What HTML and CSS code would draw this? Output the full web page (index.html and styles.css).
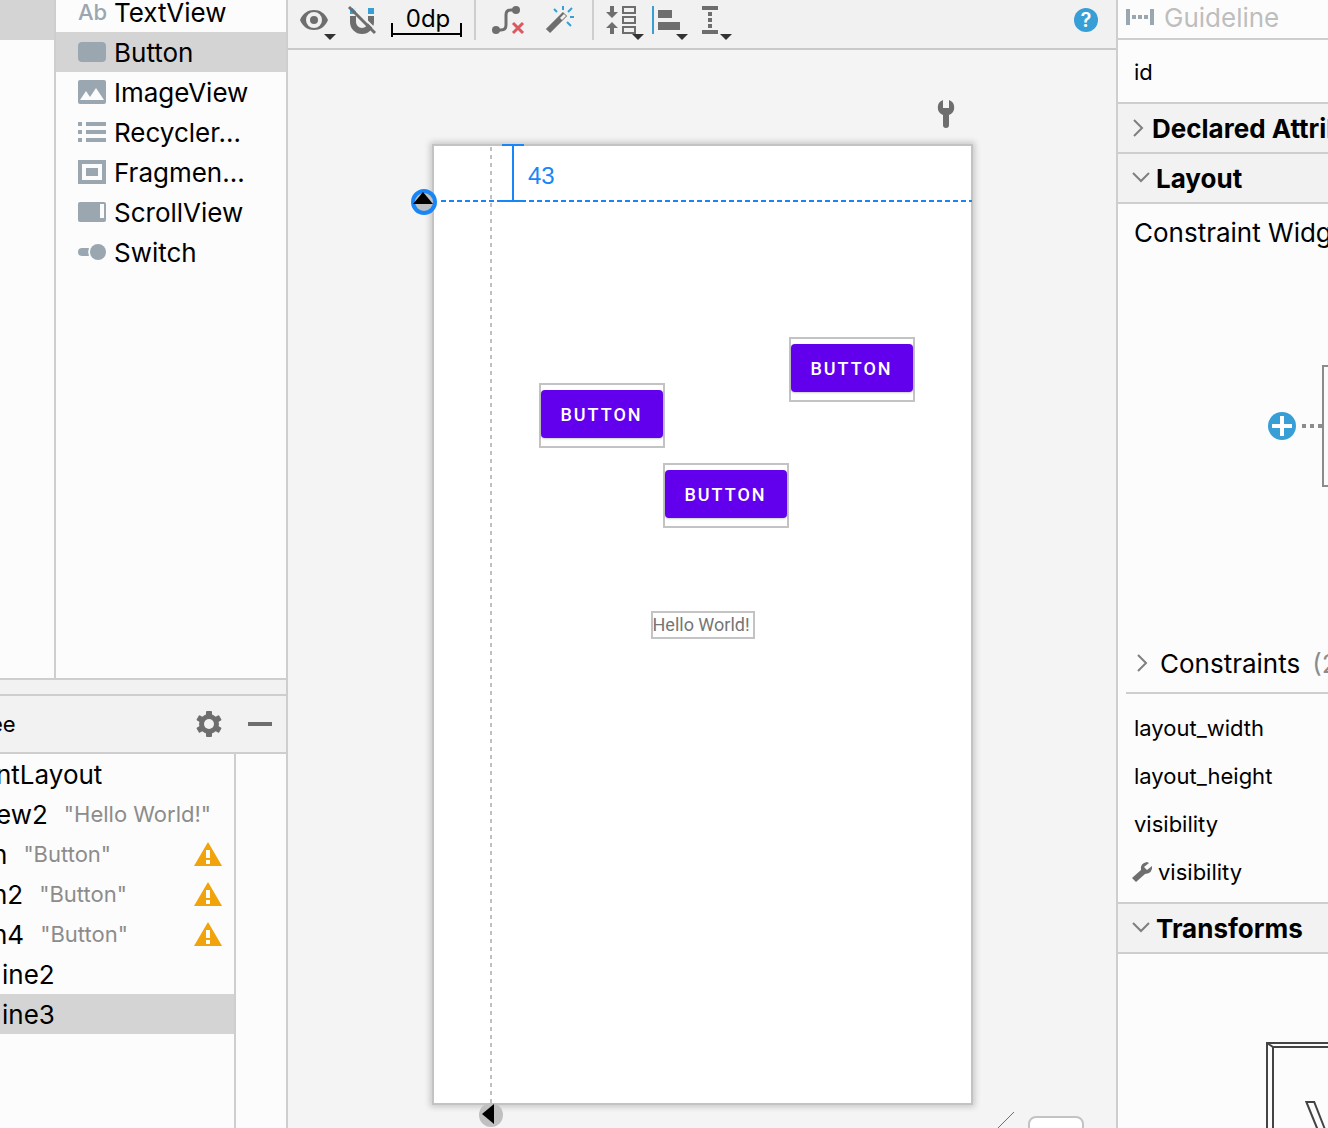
FILE: index.html
```html
<!DOCTYPE html>
<html lang="en">
<head>
  <meta charset="UTF-8"/>
  <meta name="viewport" content="width=device-width, initial-scale=1.0"/>
  <title>Layout Editor</title>
  <link rel="stylesheet" href="styles.css">
</head>
<body>
<div class="editor">

  <aside class="sidebar">
    <!-- Palette -->
    <section class="palette">
      <div class="categories">
        <div class="category selected"></div>
      </div>
      <ul class="widgets">
        <li><span class="ab">Ab</span>TextView</li>
        <li class="selected">
          <svg width="28" height="24"><rect y="2" width="28" height="20" rx="4"/></svg>Button
        </li>
        <li>
          <svg width="28" height="24"><rect width="28" height="24" rx="2"/><path class="cut" d="M2 20 L8 11 L12 17 L18 8 L26 20 Z"/></svg>ImageView
        </li>
        <li>
          <svg width="28" height="24"><path d="M0 2h4v4H0zM8 2h20v4H8zM0 10h4v4H0zM8 10h20v4H8zM0 18h4v4H0zM8 18h20v4H8z"/></svg>Recycler...
        </li>
        <li>
          <svg width="28" height="24"><path fill-rule="evenodd" d="M0 0h28v24H0zM4 4v16h20V4zM8 8h12v8H8z"/></svg>Fragmen...
        </li>
        <li>
          <svg width="28" height="24"><rect y="2" width="28" height="20" rx="2"/><path class="cut" d="M22 4h4v14h-4z"/></svg>ScrollView
        </li>
        <li>
          <svg width="28" height="24"><circle cx="20" cy="12" r="8"/><path d="M11 8H4a4 4 0 0 0 0 8h7a10 10 0 0 1 0-8z"/></svg>Switch
        </li>
      </ul>
    </section>

    <!-- Component tree -->
    <section class="tree">
      <header class="tree-header">
        <h2>ee</h2>
        <button aria-label="Settings">
          <svg width="26" height="26" viewBox="-13 -13 26 26">
            <g fill="#6e6e6e">
              <rect x="-3" y="-13" width="6" height="26" rx="1"/>
              <rect x="-3" y="-13" width="6" height="26" rx="1" transform="rotate(60)"/>
              <rect x="-3" y="-13" width="6" height="26" rx="1" transform="rotate(120)"/>
              <circle r="10"/>
            </g>
            <circle r="5" fill="#f2f2f2"/>
          </svg>
        </button>
        <button aria-label="Hide">
          <svg width="24" height="26"><path fill="#6e6e6e" d="M0 11h24v4H0z"/></svg>
        </button>
      </header>
      <div class="tree-body">
        <ul class="nodes">
          <li class="cut-left">ntLayout</li>
          <li class="cut-left">ew2 <span class="value">"Hello World!"</span></li>
          <li class="cut-half">n <span class="value">"Button"</span>
            <svg class="warning" width="28" height="24"><path fill="#f0a30a" d="M14 0 L28 24 H0Z"/><path fill="#fff" d="M12 8h4v8h-4zM12 18h4v4h-4z"/></svg>
          </li>
          <li class="cut-half">n2 <span class="value">"Button"</span>
            <svg class="warning" width="28" height="24"><path fill="#f0a30a" d="M14 0 L28 24 H0Z"/><path fill="#fff" d="M12 8h4v8h-4zM12 18h4v4h-4z"/></svg>
          </li>
          <li class="cut-half">n4 <span class="value">"Button"</span>
            <svg class="warning" width="28" height="24"><path fill="#f0a30a" d="M14 0 L28 24 H0Z"/><path fill="#fff" d="M12 8h4v8h-4zM12 18h4v4h-4z"/></svg>
          </li>
          <li class="guideline">ine2</li>
          <li class="guideline selected">ine3</li>
        </ul>
      </div>
    </section>
  </aside>

  <main class="design">
    <div class="toolbar">
      <button aria-label="View options">
        <svg width="36" height="48">
          <path fill="#6e6e6e" fill-rule="evenodd" d="M0 20C3 13 8 10 14 10s11 3 14 10c-3 7-8 10-14 10S3 27 0 20zM14 12a8 8 0 1 0 0 16 8 8 0 0 0 0-16z"/>
          <circle cx="14" cy="20" r="4" fill="#6e6e6e"/>
          <path fill="#333" d="M24 34h12l-6 6z"/>
        </svg>
      </button>
      <button aria-label="Autoconnect">
        <svg width="30" height="48">
          <path fill="#389fd6" d="M2 8h6v6H2zM20 8h6v6h-6z"/>
          <path fill="#6e6e6e" d="M2 16h6v6a6 6 0 0 0 12 0v-6h6v6a12 12 0 0 1-24 0z"/>
          <path stroke="#f1f1f1" stroke-width="2" d="M3 5l25 25"/>
          <path stroke="#6e6e6e" stroke-width="3" d="M1 7l26 26"/>
        </svg>
      </button>
      <button class="margin-button">0dp</button>
      <i class="separator"></i>
      <button aria-label="Clear constraints">
        <svg width="44" height="48">
          <circle cx="8" cy="30" r="4" fill="#6e6e6e"/><circle cx="28" cy="10" r="4" fill="#6e6e6e"/>
          <path fill="none" stroke="#6e6e6e" stroke-width="3" d="M8 30h5q5 0 5-5V15q0-5 5-5h5"/>
          <path stroke="#db5860" stroke-width="3" d="M25 23l10 10M35 23l-10 10"/>
        </svg>
      </button>
      <button aria-label="Infer constraints">
        <svg width="36" height="48">
          <path stroke="#6e6e6e" stroke-width="6" d="M4 31L21 14"/>
          <path fill="#f1f1f1" d="M16 18l4-4 2 2-4 4z"/>
          <path stroke="#389fd6" stroke-width="2" d="M10 9l3 3M19 6v4M28 8l-4 4M26 17h4M23 22l4 4"/>
        </svg>
      </button>
      <i class="separator"></i>
      <button aria-label="Pack">
        <svg width="34" height="48">
          <path fill="#6e6e6e" d="M4 6h4v6h4l-6 6-6-6h4zM4 34h4v-6h4l-6-6-6 6h4z"/>
          <path fill="none" stroke="#6e6e6e" stroke-width="2" d="M17 7h12v6H17zM17 17h12v6H17zM17 27h12v6H17z"/>
          <path fill="#333" d="M26 34h12l-6 6z"/>
        </svg>
      </button>
      <button aria-label="Align">
        <svg width="36" height="48">
          <path fill="#389fd6" d="M0 6h2v28H0z"/>
          <path fill="#6e6e6e" d="M6 10h14v8H6zM6 22h22v8H6z"/>
          <path fill="#333" d="M24 34h12l-6 6z"/>
        </svg>
      </button>
      <button aria-label="Guidelines">
        <svg width="34" height="48">
          <path fill="#6e6e6e" d="M2 6h16v4H2zM8 12h4v4H8zM8 18h4v4H8zM8 24h4v4H8zM2 30h16v4H2z"/>
          <path fill="#333" d="M20 34h12l-6 6z"/>
        </svg>
      </button>
      <button class="help" aria-label="Help">?</button>
    </div>

    <div class="surface">
      <div class="device">
        <svg class="tool-icon" width="16" height="28"><path fill="#6e6e6e" d="M5 0A8 8 0 0 0 5 15v10a3 3 0 0 0 6 0V15A8 8 0 0 0 11 0v8H5z"/></svg>

        <div class="view view-1"><button>BUTTON</button></div>
        <div class="view view-2"><button>BUTTON</button></div>
        <div class="view view-3"><button>BUTTON</button></div>
        <div class="view view-text">Hello World!</div>

        <!-- Guidelines -->
        <svg class="guides" viewBox="0 0 540 960">
          <path stroke="#c0c0c0" stroke-width="2" stroke-dasharray="4 4" d="M58 2v956"/>
          <path stroke="#1886f7" stroke-width="2" stroke-dasharray="5 3" d="M8 56h531"/>
          <path fill="none" stroke="#1886f7" stroke-width="2" d="M69 0h22M80 0v56M69 56h22"/>
          <text x="95" y="39">43</text>
          <circle cx="-9" cy="57" r="11" fill="#c0c0c0" stroke="#1886f7" stroke-width="4"/>
          <path d="M-20 59h20L-10 47z"/>
          <circle cx="58" cy="970" r="12" fill="#c0c0c0"/>
          <path d="M61 959v20l-12-10z"/>
        </svg>
      </div>
      <svg class="resize" width="18" height="18"><path stroke="#6e6e6e" d="M0 18L18 0"/></svg>
      <button class="zoom" aria-label="Pan"></button>
    </div>
  </main>

  <aside class="attributes">
    <header class="component">
      <svg width="28" height="16"><path fill="#9aa7b0" d="M0 0h4v16H0zM6 6h4v4H6zM12 6h4v4h-4zM18 6h4v4h-4zM24 0h4v16h-4z"/></svg>
      Guideline
    </header>
    <div class="id-row">id</div>
    <h3 class="section">
      <svg width="12" height="20"><path d="M2 2l8 8-8 8"/></svg>Declared Attributes
    </h3>
    <h3 class="section open">
      <svg width="18" height="12"><path d="M1 1l8 8 8-8"/></svg>Layout
    </h3>

    <div class="constraint-widget">
      <p>Constraint Widget</p>
      <svg width="60" height="124">
        <circle cx="14" cy="61" r="14" fill="#389fd6"/>
        <path fill="#fff" d="M12 51h4v20h-4zM4 59h20v4H4z"/>
        <path fill="#8c8c8c" d="M34 59h4v4h-4zM42 59h4v4h-4zM50 59h4v4h-4z"/>
        <path fill="none" stroke="#8c8c8c" stroke-width="2" d="M70 1H55v120h15"/>
      </svg>
    </div>

    <div class="constraints">
      <svg width="12" height="20"><path d="M2 2l8 8-8 8"/></svg>Constraints <span>(2)</span>
    </div>
    <ul class="props">
      <li>layout_width</li>
      <li>layout_height</li>
      <li>visibility</li>
      <li class="tools">
        <svg width="20" height="20"><path fill="#6e6e6e" d="M0 16L9 8Q8 1 15 0L17 1L12 5L15 8L20 4Q21 11 13 12L4 20z"/></svg>visibility
      </li>
    </ul>
    <h3 class="section open">
      <svg width="18" height="12"><path d="M1 1l8 8 8-8"/></svg>Transforms
    </h3>
    <div class="transforms">
      <svg width="62" height="86">
        <path d="M63 1H1v100M63 5H7v100M1 1l6 4"/>
        <text x="40" y="115">View</text>
      </svg>
    </div>
  </aside>

</div>
</body>
</html>
```

FILE: styles.css
```css
* {
  box-sizing: border-box;
}

body {
  margin: 0;
  font-family: Inter, "Liberation Sans", sans-serif;
  font-size: 26px;
  color: #000;
  background: #fcfcfc;
}

ul, h2, h3, p {
  margin: 0;
  padding: 0;
  list-style: none;
}

button {
  border: none;
  padding: 0;
  background: none;
  font-family: inherit;
}

svg {
  display: block;
  flex-shrink: 0;
  overflow: visible;
}

.editor {
  display: grid;
  grid-template-columns: 288px 1fr 212px;
  height: 100vh;
  overflow: hidden;
}

.selected {
  background: #d4d4d4;
}

/* Left side */
.sidebar {
  display: flex;
  flex-direction: column;
  min-height: 0;
  overflow: hidden;
  border-right: 2px solid #cecece;
}

.palette {
  display: flex;
  height: 680px;
  flex-shrink: 0;
  overflow: hidden;
  border-bottom: 2px solid #cecece;
}

.categories {
  width: 56px;
  border-right: 2px solid #cecece;
}

.category {
  height: 40px;
}

.widgets {
  flex: 1;
  margin-top: -8px;
}

.widgets li {
  display: flex;
  align-items: center;
  gap: 8px;
  height: 40px;
  padding-left: 22px;
}

.widgets svg {
  fill: #9aa7b0;
}

.widgets .cut {
  fill: #fcfcfc;
}

.ab {
  width: 28px;
  font-size: 22px;
  font-weight: 500;
  color: #9aa7b0;
}

.tree {
  display: flex;
  flex-direction: column;
  flex: 1;
  padding-top: 14px;
  background: #f2f2f2;
}

.tree-header {
  display: flex;
  align-items: center;
  gap: 26px;
  height: 60px;
  padding-right: 14px;
  border-top: 2px solid #cecece;
  border-bottom: 2px solid #cecece;
}

.tree-header h2 {
  flex: 1;
  margin-left: -10px;
  font-size: 22px;
  font-weight: 400;
}

.tree-body {
  display: flex;
  flex: 1;
  background: #fcfcfc;
}

.nodes {
  width: 236px;
  border-right: 2px solid #cecece;
}

.nodes li {
  display: flex;
  align-items: center;
  gap: 16px;
  height: 40px;
  padding-right: 12px;
}

.nodes .cut-left {
  text-indent: -4px;
}

.nodes .cut-half {
  text-indent: -8px;
}

.nodes .guideline {
  padding-left: 2px;
}

.value {
  font-size: 22px;
  text-indent: 0;
  color: #8c8c8c;
}

.warning {
  margin-left: auto;
}

/* Design surface */
.design {
  display: flex;
  flex-direction: column;
  min-width: 0;
  background: #f4f4f4;
}

.toolbar {
  display: flex;
  gap: 12px;
  height: 50px;
  padding: 0 18px 0 12px;
  background: #f1f1f1;
  border-bottom: 2px solid #c9c9c9;
}

.separator {
  width: 2px;
  height: 40px;
  background: #cecece;
}

.margin-button {
  align-self: flex-start;
  width: 72px;
  height: 37px;
  padding-left: 4px;
  font-size: 24px;
  line-height: 36px;
  background: linear-gradient(#000, #000) 1px 33px / 70px 2px no-repeat,
    linear-gradient(#000, #000) 1px 23px / 2px 14px no-repeat,
    linear-gradient(#000, #000) 70px 23px / 2px 14px no-repeat;
}

.help {
  width: 24px;
  height: 24px;
  margin-top: 8px;
  margin-left: auto;
  border-radius: 50%;
  background: #389fd6;
  color: #fff;
  font-size: 20px;
  font-weight: 600;
  line-height: 24px;
}

.surface {
  position: relative;
  flex: 1;
  min-height: 0;
  padding-top: 94px;
}

.device {
  position: relative;
  width: 541px;
  height: 961px;
  margin: 0 auto;
  background: #fff;
  border: 2px solid #c3c3c3;
  box-shadow: 0 0 6px 2px rgba(0, 0, 0, 0.18);
}

/* Things placed on the device canvas */
.guides {
  position: absolute;
  top: -1px;
  left: -1px;
  width: 540px;
  height: 960px;
}

.guides text {
  font-family: "Liberation Sans", sans-serif;
  font-size: 24px;
  fill: #1886f7;
}

.tool-icon {
  position: absolute;
  top: -46px;
  right: 17px;
}

.view {
  position: absolute;
  width: 126px;
  height: 65px;
  padding: 5px 0 0;
  border: 2px solid #c3c3c3;
}

.view button {
  display: block;
  width: 122px;
  height: 48px;
  border-radius: 4px;
  background: #6200ee;
  color: #fff;
  font-family: Roboto, sans-serif;
  font-size: 18px;
  font-weight: 500;
  letter-spacing: 2px;
  box-shadow: 0 1px 2px rgba(0, 0, 0, 0.2);
}

.view-1 {
  top: 237px;
  left: 105px;
}

.view-2 {
  top: 191px;
  left: 355px;
}

.view-3 {
  top: 317px;
  left: 229px;
}

.view-text {
  top: 465px;
  left: 217px;
  width: 104px;
  height: 28px;
  padding: 0;
  font-family: Roboto, sans-serif;
  font-size: 18px;
  line-height: 24px;
  color: #757575;
}

.resize {
  position: absolute;
  right: 102px;
  bottom: -2px;
}

.zoom {
  position: absolute;
  right: 32px;
  bottom: -40px;
  width: 56px;
  height: 52px;
  border: 2px solid #c3c3c3;
  border-radius: 8px;
  background: #fff;
}

/* Attributes */
.attributes {
  overflow: hidden;
  border-left: 2px solid #cecece;
  white-space: nowrap;
}

.component {
  display: flex;
  align-items: center;
  gap: 10px;
  height: 40px;
  padding: 0 8px 4px;
  border-bottom: 2px solid #cecece;
  color: #bebebe;
}

.id-row {
  height: 62px;
  padding: 0 16px;
  font-size: 22px;
  line-height: 64px;
}

.section {
  display: flex;
  align-items: center;
  gap: 8px;
  height: 52px;
  padding-left: 14px;
  background: #f2f2f2;
  border-top: 2px solid #cecece;
  border-bottom: 2px solid #cecece;
  font-size: 26px;
  font-weight: 700;
}

.section + .section {
  margin-top: -2px;
}

.section.open {
  gap: 6px;
}

.section svg,
.constraints svg {
  fill: none;
  stroke: #7f7f7f;
  stroke-width: 2;
}

.constraint-widget {
  height: 430px;
}

.constraint-widget p {
  padding: 14px 0 0 16px;
  line-height: 30px;
}

.constraint-widget svg {
  margin: 117px 0 0 auto;
}

.constraints {
  display: flex;
  align-items: center;
  gap: 12px;
  height: 60px;
  margin-left: 8px;
  padding-left: 10px;
  border-bottom: 2px solid #cecece;
}

.constraints span {
  color: #8c8c8c;
}

.props {
  padding: 10px 0 6px 16px;
  font-size: 22px;
  line-height: 48px;
}

.tools {
  display: flex;
  align-items: center;
  gap: 6px;
  margin-left: -2px;
}

.transforms {
  padding-top: 88px;
}

.transforms svg {
  margin-left: auto;
  fill: none;
  stroke: #444;
  stroke-width: 2;
}

.transforms text {
  font-family: "Liberation Sans", sans-serif;
  font-size: 80px;
}
```
